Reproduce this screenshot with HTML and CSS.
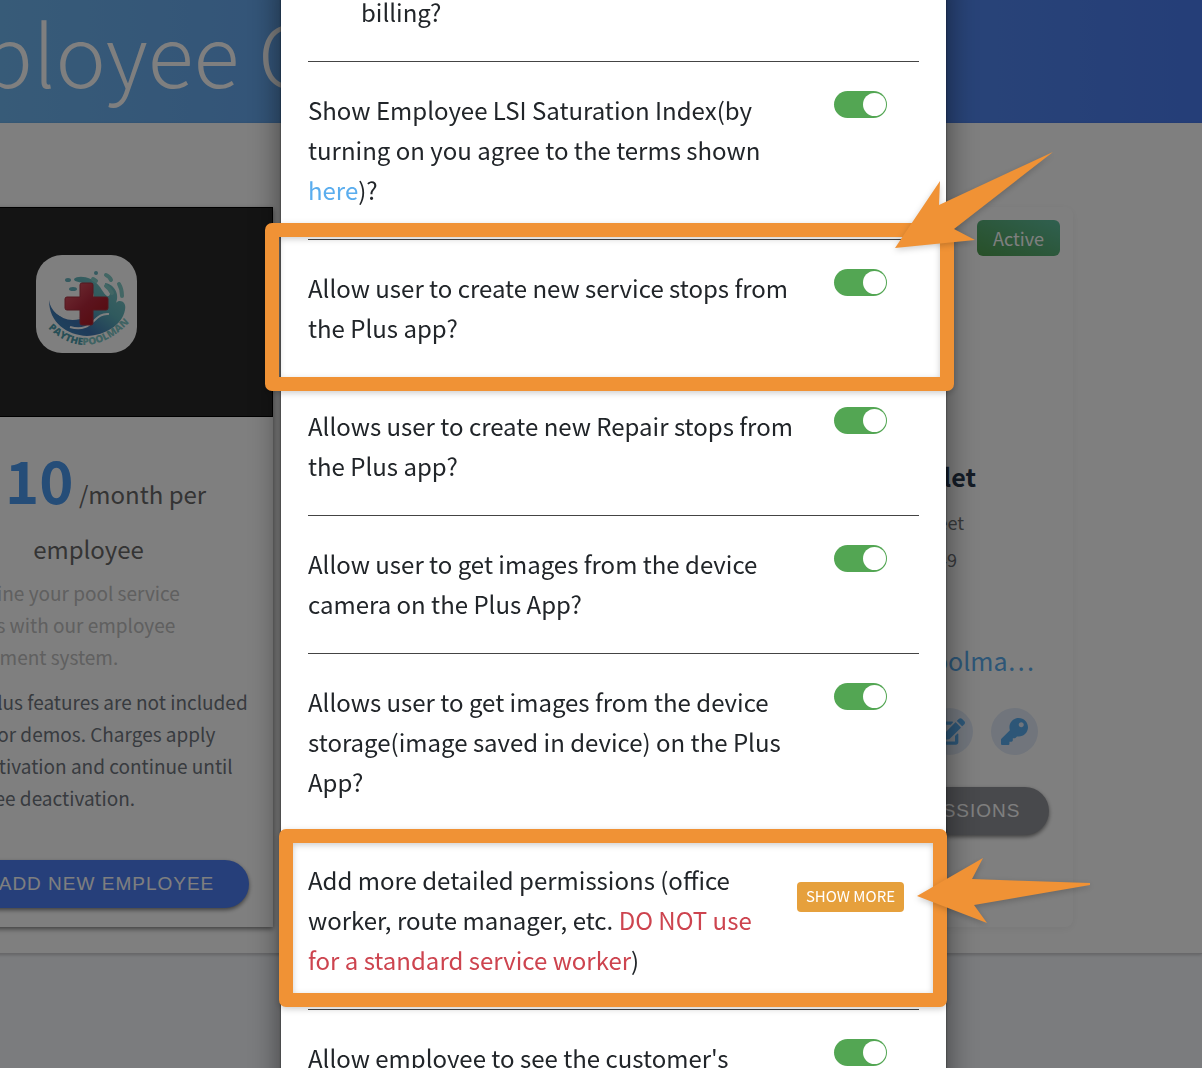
FILE: index.html
```
<!DOCTYPE html>
<html lang="en">
  <head>
    <meta charset="utf-8">
    <title>Employee Center</title>
    <link rel="stylesheet" href="styles.css">
  </head>
  <body>
    <div class="page">
      <header class="page-header">
        <h1 class="page-title">Employee Center</h1>
      </header>

      <main class="employees">
        <section class="card plan-card">
          <div class="plan-banner">
            <svg class="plan-logo" viewBox="0 0 101 98" role="img" aria-label="Pay The Pool Man">
              <defs>
                <linearGradient id="wave" x1="0" y1="1" x2="1" y2="0">
                  <stop offset="0" stop-color="#3f8fc0"/>
                  <stop offset=".3" stop-color="#3f76b4"/>
                  <stop offset=".6" stop-color="#5fb3bb"/>
                  <stop offset="1" stop-color="#84ccc8"/>
                </linearGradient>
                <linearGradient id="cross" x1="0" y1="0" x2="1" y2="1">
                  <stop offset="0" stop-color="#e0606c"/>
                  <stop offset=".5" stop-color="#b8283c"/>
                  <stop offset="1" stop-color="#a81418"/>
                </linearGradient>
                <path id="arc" d="M12 73Q50 109 92 69"/>
              </defs>
              <rect width="101" height="98" rx="26" fill="#fff"/>
              <path fill="url(#wave)" d="M13 45C15 60 30 67 45 62C61 56 62 38 51 30C46 26 38 28 38 24C42 20 56 21 64 32C69 40 72 44 74 39C74 34 69 31 69 28C78 29 84 39 80 48C83 44 91 46 89 55C86 70 70 80 51 81C31 80 13 68 13 45Z"/>
              <path fill="none" stroke="#fff" stroke-width="2" d="M15 47C21 63 33 66 44 63M34 72C57 79 57 57 73 59"/>
              <g fill="none" stroke="#84ccc8" stroke-width="4" stroke-linecap="round">
                <path d="M70 20Q74 22 75 25M83 29Q86 34 86 41M70 31Q74 34 76 38M57 24L60 26"/>
              </g>
              <g fill="#6bb4c0">
                <ellipse cx="32" cy="25" rx="3" ry="2"/>
                <ellipse cx="37" cy="34" rx="4" ry="2"/>
                <circle cx="60" cy="18" r="2"/>
              </g>
              <path fill="url(#cross)" stroke="#a83240" d="M46 28h9q2 0 2 2v12h13q2 0 2 2v9q0 2-2 2H57v13q0 2-2 2h-9q-2 0-2-2V55H31q-2 0-2-2v-9q0-2 2-2h13V30q0-2 2-2z"/>
              <text class="plan-logo-text"><textPath href="#arc"><tspan fill="#4f9fae">PAYTHE</tspan><tspan fill="#7fc6c6">POOLMAN</tspan></textPath></text>
            </svg>
          </div>
          <div class="plan-body">
            <p class="plan-price"><strong><span class="currency">$</span>10</strong> /month per<br>employee</p>
            <p class="plan-about">Streamline your pool service<br>business with our employee<br>management system.</p>
            <p class="plan-terms">These Plus features are not included<br>for trial or demos. Charges apply<br>upon activation and continue until<br>employee deactivation.</p>
            <button class="pill-button add-button" type="button">
              <svg width="20" height="20" viewBox="0 0 20 20" aria-hidden="true"><path d="M10 3v14M3 10h14" stroke="currentColor" stroke-width="2"/></svg>
              ADD NEW EMPLOYEE
            </button>
          </div>
        </section>

        <section class="card"></section>

        <section class="card employee-card">
          <span class="status">Active</span>
          <h2 class="employee-name">Hamlet</h2>
          <p class="employee-line street">Street</p>
          <p class="employee-line zip">49</p>
          <a class="employee-email" href="#">paythepoolma…</a>
          <div class="employee-actions">
            <button class="icon-button" type="button" aria-label="Edit">
              <svg width="30" height="27" viewBox="0 0 576 512" aria-hidden="true"><path fill="currentColor" d="M402.600 83.200l90.200 90.200c3.800 3.800 3.800 10 0 13.800L274.400 405.600l-92.800 10.300c-12.400 1.400-22.900-9.100-21.500-21.500l10.300-92.800L388.800 83.200c3.800-3.800 10-3.800 13.800 0zm162-22.900l-48.800-48.800c-15.200-15.200-39.900-15.200-55.200 0l-35.400 35.400c-3.800 3.800-3.800 10 0 13.800l90.200 90.200c3.800 3.800 10 3.800 13.800 0l35.400-35.400c15.200-15.300 15.200-40 0-55.200zM384 346.200V448H64V128h229.800c3.200 0 6.200-1.300 8.500-3.500l40-40c7.600-7.600 2.200-20.500-8.500-20.500H48C21.500 64 0 85.500 0 112v352c0 26.500 21.500 48 48 48h352c26.500 0 48-21.500 48-48V306.200c0-10.700-12.900-16-20.500-8.500l-40 40c-2.200 2.300-3.500 5.300-3.500 8.500z"/></svg>
            </button>
            <button class="icon-button" type="button" aria-label="Reset password">
              <svg width="27" height="27" viewBox="0 0 512 512" aria-hidden="true"><path fill="currentColor" d="M512 176c0 97.200-78.800 176-176 176-11.200 0-22.200-1.100-32.800-3.100l-24 27A24 24 0 0 1 261.200 384H224v40c0 13.300-10.700 24-24 24h-40v40c0 13.300-10.700 24-24 24H24c-13.300 0-24-10.700-24-24v-78c0-6.400 2.500-12.500 7-17l161.800-161.800C162.800 213.800 160 195.200 160 176 160 78.800 238.800 0 336 0c97.400 0 176 78.600 176 176zM336 128c0 26.500 21.500 48 48 48s48-21.500 48-48-21.500-48-48-48-48 21.500-48 48z"/></svg>
            </button>
          </div>
          <button class="pill-button permissions-button" type="button">PERMISSIONS</button>
        </section>
      </main>
    </div>

    <div class="backdrop">
      <div class="modal" role="dialog" aria-label="Employee permissions">
        <div class="row">
          <span class="row-text indented">billing?</span>
        </div>
        <div class="row">
          <label class="row-text" for="lsi">Show Employee LSI Saturation Index(by turning on you agree to the terms shown <a href="#">here</a>)?</label>
          <input class="switch" id="lsi" type="checkbox" checked>
        </div>
        <div class="row">
          <label class="row-text" for="service-stops">Allow user to create new service stops from the Plus app?</label>
          <input class="switch" id="service-stops" type="checkbox" checked>
          <div class="highlight highlight-stops"></div>
          <svg class="arrow arrow-stops" viewBox="0 0 160 98" aria-hidden="true"><path d="M0 97L45 30L44 54L158 1L59 78L80 89Z"/></svg>
        </div>
        <div class="row">
          <label class="row-text" for="repair-stops">Allows user to create new Repair stops from the Plus app?</label>
          <input class="switch" id="repair-stops" type="checkbox" checked>
        </div>
        <div class="row">
          <label class="row-text" for="camera">Allow user to get images from the device camera on the Plus App?</label>
          <input class="switch" id="camera" type="checkbox" checked>
        </div>
        <div class="row">
          <label class="row-text" for="storage">Allows user to get images from the device storage(image saved in device) on the Plus App?</label>
          <input class="switch" id="storage" type="checkbox" checked>
        </div>
        <div class="row">
          <span class="row-text">Add more detailed permissions (office worker, route manager, etc. <span class="warning">DO NOT use for a standard service worker</span>)</span>
          <button class="show-more" type="button">SHOW MORE</button>
          <div class="highlight highlight-more"></div>
          <svg class="arrow arrow-more" viewBox="0 0 174 66" aria-hidden="true"><path d="M0 38L66 0L55 21L173 25V27L57 47L70 65Z"/></svg>
        </div>
        <div class="row">
          <label class="row-text" for="customer">Allow employee to see the customer's phone number?</label>
          <input class="switch" id="customer" type="checkbox" checked>
        </div>
      </div>
    </div>
  </body>
</html>
```
FILE: styles.css
```
* {
  box-sizing: border-box;
}
body {
  margin: 0;
  height: 100vh;
  overflow: hidden;
  background-color: #f6f8fc;
  font-family: "Noto Sans CJK SC", "Noto Sans", sans-serif;
  color: #212529;
}
h1, h2, p {
  margin: 0;
}
a {
  color: #5aadee;
  text-decoration: none;
}
button {
  border: none;
  padding: 0;
  cursor: pointer;
}

/* page behind the dialog */
.page {
  margin-left: -100px;
}
.page-header {
  height: 123px;
  background-image: linear-gradient(to right, #72bbf0, #4a7cf0);
}
.page-title {
  margin-left: -44px;
  font-size: 85px;
  font-weight: 200;
  line-height: 102px;
  white-space: nowrap;
  color: white;
}
.employees {
  display: grid;
  grid-template-columns: repeat(3, 1fr);
  gap: 27px;
  padding: 84px 129px 26px 0;
  background-color: white;
  border-bottom: 1px solid #d0d0d4;
  box-shadow: 0 1px 3px rgba(0, 0, 0, 0.2);
}
.card {
  height: 720px;
  border-radius: 8px;
  background-color: white;
  box-shadow: 0 2px 8px rgba(0, 0, 0, 0.06);
}
.plan-card {
  border-radius: 0;
  box-shadow: 0 2px 5px rgba(0, 0, 0, 0.5);
}
.plan-banner {
  display: flex;
  justify-content: center;
  height: 210px;
  padding-top: 47px;
  border: 1px solid black;
  background-color: #282828;
}
.plan-logo {
  width: 101px;
  height: 98px;
}
.plan-logo-text {
  font-family: "Open Sans", sans-serif;
  font-size: 10px;
  font-weight: 800;
}
.plan-body {
  padding: 35px 24px 0 28px;
  font-size: 19px;
  line-height: 32px;
  white-space: nowrap;
}
.plan-price {
  font-size: 24px;
  line-height: 55px;
  text-align: center;
  color: #686868;
}
.plan-price strong {
  font-size: 58px;
  color: #4a9af0;
}
.currency {
  margin: 0 12px 0 -12px;
}
.plan-about {
  margin-top: 1px;
  color: #c0c0c0;
}
.plan-terms {
  margin-top: 13px;
  color: #70767e;
}
.pill-button {
  display: flex;
  align-items: center;
  justify-content: center;
  height: 48px;
  border-radius: 24px;
  font-family: "Liberation Sans", sans-serif;
  font-size: 19px;
  letter-spacing: 1px;
  color: white;
  box-shadow: 0 2px 4px rgba(0, 0, 0, 0.5);
}
.add-button {
  gap: 16px;
  width: 100%;
  margin-top: 46px;
  background-color: #4c7ff4;
}
.employee-card {
  display: flex;
  flex-direction: column;
  align-items: flex-end;
  padding: 13px 13px 0;
}
.status {
  padding: 0 16px;
  border-radius: 6px;
  font-size: 18px;
  line-height: 36px;
  color: white;
  background-image: linear-gradient(to top right, #50a050, #60c0a0);
}
.employee-name {
  margin: 202px 84px 5px 0;
  font-size: 25px;
  line-height: 36px;
  color: #28384c;
}
.employee-line {
  margin-top: 9px;
  font-size: 18px;
  line-height: 28px;
  color: #707478;
}
.street {
  margin-right: 96px;
}
.zip {
  margin-right: 103px;
}
.employee-email {
  margin: 69px 26px 0 0;
  font-size: 25px;
  line-height: 36px;
}
.employee-actions {
  display: flex;
  gap: 18px;
  margin: 30px 22px 0 0;
}
.icon-button {
  display: flex;
  align-items: center;
  justify-content: center;
  width: 47px;
  height: 47px;
  border-radius: 50%;
  color: #5aadee;
  background-color: #e2ebf8;
}
.permissions-button {
  width: 200px;
  margin: 32px 11px 0 0;
  background-color: #909298;
}

/* dialog */
.backdrop {
  position: fixed;
  inset: 0;
  display: flex;
  justify-content: center;
  align-items: flex-start;
  padding-left: 25px;
  overflow: hidden;
  background-color: rgba(0, 0, 0, 0.5);
}
.modal {
  width: 665px;
  margin-top: -36px;
  padding: 0 27px;
  background-color: white;
  box-shadow: 0 0 2px rgba(0, 0, 0, 0.6), 0 8px 30px rgba(0, 0, 0, 0.5);
}
.row {
  position: relative;
  display: flex;
  align-items: flex-start;
  justify-content: space-between;
  gap: 30px;
  padding: 28px 0 29px;
  border-bottom: 1px solid #444;
}
.row-text {
  flex: 1;
  font-size: 24px;
  line-height: 40px;
}
.indented {
  padding-left: 53px;
}
.warning {
  color: #cd444f;
}
.switch {
  appearance: none;
  display: flex;
  justify-content: flex-end;
  width: 53px;
  height: 27px;
  margin: 1px 32px 0 0;
  padding: 2px 1px;
  border-radius: 14px;
  background-color: #53a653;
  cursor: pointer;
}
.switch::before {
  content: "";
  width: 23px;
  height: 23px;
  border-radius: 50%;
  background-color: white;
}
.switch:not(:checked) {
  justify-content: flex-start;
  background-color: #bbb;
}
.show-more {
  height: 30px;
  margin: 22px 15px 0 0;
  padding: 0 9px 3px;
  border-radius: 4px;
  font-family: inherit;
  font-size: 15px;
  color: white;
  background-color: #e6a03c;
}

/* callouts */
.highlight {
  position: absolute;
  border: 14px solid #f09235;
  border-radius: 7px;
  pointer-events: none;
  filter: drop-shadow(0 2px 3px rgba(0, 0, 0, 0.2));
}
.highlight-stops {
  inset: -17px -35px -14px -43px;
}
.highlight-more {
  inset: -3px -28px 2px -29px;
}
.arrow {
  position: absolute;
  z-index: 1;
  fill: #f09235;
  pointer-events: none;
  filter: drop-shadow(0 2px 3px rgba(0, 0, 0, 0.2));
}
.arrow-stops {
  top: -89px;
  right: -136px;
  width: 160px;
}
.arrow-more {
  top: 26px;
  right: -172px;
  width: 174px;
}
```
